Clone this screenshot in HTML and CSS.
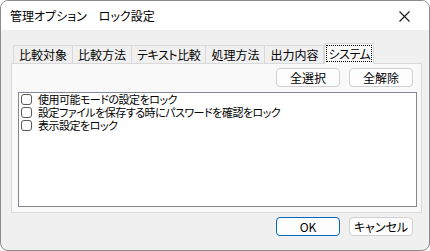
FILE: index.html
```html
<!DOCTYPE html>
<html lang="ja">
<head>
    <meta charset="UTF-8">
    <title>管理オプション　ロック設定</title>
    <link rel="stylesheet" href="styles.css">
</head>
<body>
    <div class="window">
        <div class="titlebar">
            <span class="title">管理オプション　ロック設定</span>
            <span class="close">
                <svg width="11" height="11" viewBox="0 0 11 11">
                    <path d="M0.5 0.5 L10.5 10.5 M10.5 0.5 L0.5 10.5" stroke="#1a1a1a" stroke-width="1.1" fill="none"/>
                </svg>
            </span>
        </div>

        <div class="dialog-body">
            <div class="tabs">
                <div class="tab">比較対象</div>
                <div class="tab">比較方法</div>
                <div class="tab">テキスト比較</div>
                <div class="tab">処理方法</div>
                <div class="tab">出力内容</div>
                <div class="tab active"><span class="focus">システム</span></div>
            </div>

            <div class="panel">
                <div class="panel-actions">
                    <button class="btn">全選択</button>
                    <button class="btn">全解除</button>
                </div>
                <div class="listbox">
                    <label class="item"><span class="check"></span><span class="item-text">使用可能モードの設定をロック</span></label>
                    <label class="item"><span class="check"></span><span class="item-text">設定ファイルを保存する時にパスワードを確認をロック</span></label>
                    <label class="item"><span class="check"></span><span class="item-text">表示設定をロック</span></label>
                </div>
            </div>

            <div class="footer">
                <button class="btn btn-default">OK</button>
                <button class="btn">キャンセル</button>
            </div>
        </div>
    </div>
</body>
</html>
```

FILE: styles.css
```css
* {
    box-sizing: border-box;
    margin: 0;
    padding: 0;
}

body {
    width: 430px;
    height: 251px;
    font-family: "Noto Sans CJK JP", "Noto Sans", sans-serif;
    font-feature-settings: "palt";
    font-size: 12px;
    color: #000;
    background: #fff;
}

.window {
    width: 430px;
    height: 251px;
    border: 1px solid #8c8c8c;
    border-radius: 8px;
    overflow: hidden;
    display: flex;
    flex-direction: column;
    background: #f0f0f0;
}

.titlebar {
    height: 29px;
    flex-shrink: 0;
    background: #fff;
    display: flex;
    align-items: center;
    justify-content: space-between;
    padding: 0 19px 0 9px;
}

.title {
    font-size: 12px;
    line-height: 14px;
    margin-top: 1px;
}

.close {
    display: flex;
    margin-top: 1px;
}

.dialog-body {
    flex: 1;
    display: flex;
    flex-direction: column;
    padding: 13px 7px 0 10px;
}

/* tab strip */
.tabs {
    display: flex;
    align-items: flex-end;
    height: 20px;
    padding-left: 2px;
    position: relative;
    z-index: 1;
}

.tab {
    height: 18px;
    padding: 0 5px 0 5px;
    line-height: 17px;
    border: 1px solid #d9d9d9;
    border-bottom: none;
    margin-right: -1px;
    background: #f0f0f0;
    white-space: nowrap;
}

.tab:nth-child(3) {
    letter-spacing: -0.4px;
}

.tab.active {
    height: 21px;
    margin: 0 0 -1px 1px;
    padding: 1px 1px 0 1px;
    background: #f9f9f9;
    border-color: #d9d9d9;
    letter-spacing: -0.5px;
}

.focus {
    display: block;
    border: 1px dotted #000;
    line-height: 15px;
    padding: 0 1px 0 1px;
}

.panel {
    height: 150px;
    border: 1px solid #d9d9d9;
    background: #f9f9f9;
    display: flex;
    flex-direction: column;
    padding: 4px 8px 5px 6px;
}

.panel-actions {
    display: flex;
    justify-content: flex-end;
    gap: 9px;
    margin-bottom: 5px;
}

.btn {
    width: 64px;
    height: 19px;
    font-family: inherit;
    font-feature-settings: "palt";
    font-size: 12px;
    line-height: 16px;
    background: #fdfdfd;
    border: 1px solid #d0d0d0;
    border-radius: 4px;
    color: #000;
}

.btn-default {
    border: 1.5px solid #0067c0;
}

.listbox {
    flex: 1;
    margin-right: -4px;
    background: #fff;
    border: 1px solid #828790;
    padding: 0 2px;
    display: flex;
    flex-direction: column;
}

.item {
    display: flex;
    align-items: center;
    height: 13px;
    font-size: 11px;
    letter-spacing: -0.5px;
    white-space: nowrap;
}

.item-text {
    line-height: 13px;
}

.check {
    width: 11px;
    height: 11px;
    border: 1px solid #5a5a5a;
    border-radius: 3px;
    background: #fff;
    margin-right: 6px;
    flex-shrink: 0;
}

.footer {
    display: flex;
    justify-content: flex-end;
    gap: 9px;
    padding: 4px 9px 0 0;
}
```
